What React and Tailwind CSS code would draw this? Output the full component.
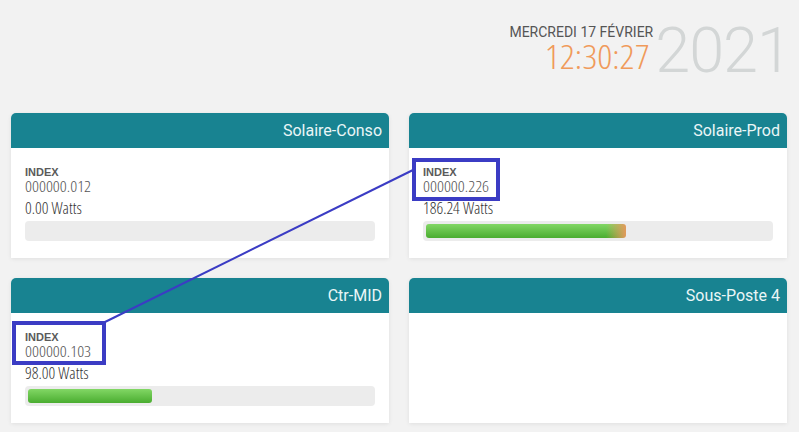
import React from 'react';

const cond = "font-['Open_Sans',sans-serif] font-light font-stretch-condensed";

const cards = [
  { name: 'Solaire-Conso', index: '000000.012', watts: '0.00', fill: 0 },
  { name: 'Solaire-Prod', index: '000000.226', watts: '186.24', fill: 200, warm: true },
  { name: 'Ctr-MID', index: '000000.103', watts: '98.00', fill: 124 },
  { name: 'Sous-Poste 4' },
];

const Card = ({ name, index, watts, fill, warm }) => (
  <div className="bg-white rounded-t-[5px] shadow-[0_1px_4px_rgba(0,0,0,0.08)] flex flex-col">
    <div className="h-[35px] bg-[#188391] rounded-t-[5px] flex items-center justify-end pr-[7px]">
      <span className="font-['Roboto',sans-serif] text-[16px] text-[#eaf6f7]">{name}</span>
    </div>
    <div className="h-[110px] px-[14px] pt-[18px]">
      {index && (
        <>
          <p className="font-['Liberation_Sans',sans-serif] font-bold text-[11px] leading-[12px] text-[#5a5a5a]">INDEX</p>
          <p className={`${cond} text-[14.5px] leading-[16px] mt-[1px] text-[#555] scale-x-[1.18] origin-left`}>{index}</p>
          <p className={`${cond} text-[16px] leading-[18px] mt-[4px] text-[#333] scale-x-[1.03] origin-left`}>{watts} Watts</p>
          <div className="mt-[4px] h-[20px] bg-[#ececec] rounded-[4px] p-[3px]">
            {fill > 0 && (
              <div
                className={
                  warm
                    ? 'h-[14px] rounded-[3px] bg-[linear-gradient(to_right,transparent_90%,#e39a5c),linear-gradient(to_bottom,#82d765,#4aad30)]'
                    : 'h-[14px] rounded-[3px] bg-[linear-gradient(to_bottom,#82d765,#4aad30)]'
                }
                style={{ width: fill }}
              />
            )}
          </div>
        </>
      )}
    </div>
  </div>
);

export default function App() {
  return (
    <div className="relative w-full h-[432px] bg-[#f2f2f2] overflow-hidden">
      {/* clock */}
      <div className="h-[113px] flex justify-end items-start pr-[8px]">
        <div className="flex flex-col items-end mt-[25px]">
          <span className="font-['Roboto',sans-serif] text-[14px] leading-[15px] text-[#555]">MERCREDI 17 FÉVRIER</span>
          <span className={`${cond} text-[33px] leading-[33px] mr-[4px] text-[#f09a5a] scale-x-[1.12] origin-right`}>12:30:27</span>
        </div>
        <span className="font-['Roboto',sans-serif] font-light text-[63px] leading-none tracking-[-1px] text-[#d3d6d6] mt-[19px] ml-[2px]">2021</span>
      </div>

      <div className="grid grid-cols-2 gap-[20px] pl-[11px] pr-[12px]">
        {cards.map(c => <Card key={c.name} {...c} />)}
      </div>

      {/* annotation */}
      <svg className="absolute left-0 top-0 pointer-events-none" width="799" height="432">
        <rect x="414" y="160" width="84" height="39" fill="none" stroke="#3b3cc4" strokeWidth="4" />
        <rect x="14" y="323" width="90" height="40" fill="none" stroke="#3b3cc4" strokeWidth="4" />
        <line x1="105" y1="322" x2="413" y2="170" stroke="#3b3cc4" strokeWidth="2" />
      </svg>
    </div>
  );
}
